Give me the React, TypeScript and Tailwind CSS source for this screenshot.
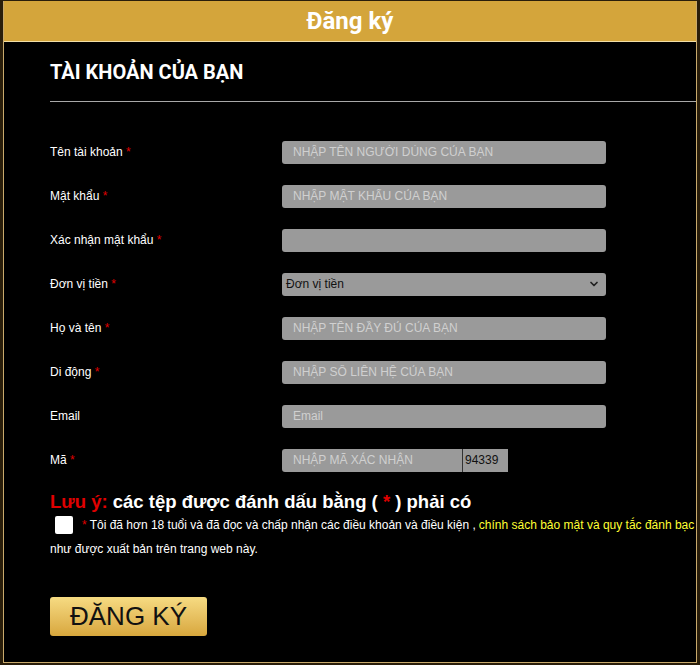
import { ChevronDown } from "lucide-react";

const fields = [
  { label: "Tên tài khoản", required: true, placeholder: "NHẬP TÊN NGƯỜI DÙNG CỦA BẠN" },
  { label: "Mật khẩu", required: true, placeholder: "NHẬP MẬT KHẨU CỦA BẠN" },
  { label: "Xác nhận mật khẩu", required: true, placeholder: "" },
];

const fields2 = [
  { label: "Họ và tên", required: true, placeholder: "NHẬP TÊN ĐẦY ĐỦ CỦA BẠN" },
  { label: "Di động", required: true, placeholder: "NHẬP SỐ LIÊN HỆ CỦA BẠN" },
  { label: "Email", required: false, placeholder: "Email" },
];

export default function App() {
  return (
    <div className="h-[665px] w-[700px] bg-[#2a1e0a] px-[3px] pb-[2px] pt-[1px] font-['Liberation_Sans',Arial,sans-serif]">
      <div className="flex h-full flex-col overflow-hidden border-x border-b border-[#c9aa6c] bg-black">
        {/* Header */}
        <div className="-mx-px flex h-[41px] shrink-0 items-center justify-center border-b border-[#f2dea6] bg-[#d4a53b]">
          <h1 className="font-['Roboto',sans-serif] text-[24px] font-bold text-white">
            Đăng ký
          </h1>
        </div>

        <div className="flex-1 pl-[46px] pt-[20px]">
          <h2 className="font-['Roboto',sans-serif] text-[20px] leading-[20px] font-bold text-white">
            TÀI KHOẢN CỦA BẠN
          </h2>
          <div className="mt-[19px] h-[1px] bg-[#a8a8a8]" />

          <div className="mt-[28px]">
            {fields.map((f) => (
              <FieldRow key={f.label} label={f.label} required={f.required}>
                <TextInput placeholder={f.placeholder} />
              </FieldRow>
            ))}

            <FieldRow label="Đơn vị tiền" required>
              <div className="flex h-[23px] w-[324px] items-center justify-between rounded-[3px] bg-[#9a9a9a] pl-[4px] pr-[6px] text-[12px] text-[#111]">
                <span>Đơn vị tiền</span>
                <ChevronDown size={12} strokeWidth={3.5} className="text-[#222]" />
              </div>
            </FieldRow>

            {fields2.map((f) => (
              <FieldRow key={f.label} label={f.label} required={f.required}>
                <TextInput placeholder={f.placeholder} />
              </FieldRow>
            ))}

            <FieldRow label="Mã" required>
              <div className="flex h-[23px]">
                <div className="flex w-[180px] items-center rounded-l-[3px] bg-[#9a9a9a] pl-[11px] text-[12px] text-[#d0d0d0]">
                  NHẬP MÃ XÁC NHẬN
                </div>
                <div className="flex w-[46px] items-center border-l border-[#333] bg-[#9a9a9a] pl-[2px] text-[12px] text-[#111]">
                  94339
                </div>
              </div>
            </FieldRow>
          </div>

          <p className="mt-[9px] text-[18.5px] leading-[22px] font-bold text-white">
            <span className="text-[#e00000]">Lưu ý:</span> các tệp được đánh dấu bằng ({" "}
            <span className="text-[#e00000]">*</span> ) phải có
          </p>

          <div className="mt-[1px] flex h-[22px] items-center whitespace-nowrap text-[12px]">
            <span className="ml-[5px] h-[18px] w-[18px] shrink-0 rounded-[2px] bg-white" />
            <span className="ml-[9px] text-[#e00000]">*</span>
            <span className="ml-[3px] text-white">
              Tôi đã hơn 18 tuổi và đã đọc và chấp nhận các điều khoản và điều kiện ,{" "}
            </span>
            <span className="ml-[3px] text-[#ffff33]">
              chính sách bảo mật và quy tắc đánh bạc
            </span>
          </div>
          <p className="mt-[2px] text-[12px] leading-[22px] text-white">
            như được xuất bản trên trang web này.
          </p>

          <button
            type="button"
            className="mt-[37px] flex h-[39px] w-[157px] items-center justify-center rounded-[3px] bg-gradient-to-b from-[#f6db82] to-[#d8a73c] text-[26px] text-[#111]"
          >
            ĐĂNG KÝ
          </button>
        </div>
      </div>
    </div>
  );
}

function FieldRow({
  label,
  required,
  children,
}: {
  label: string;
  required?: boolean;
  children: React.ReactNode;
}) {
  return (
    <div className="flex h-[44px] items-center">
      <div className="w-[232px] text-[12px] text-white">
        {label}
        {required && <span className="text-[#e00000]"> *</span>}
      </div>
      {children}
    </div>
  );
}

function TextInput({ placeholder }: { placeholder: string }) {
  return (
    <input
      type="text"
      placeholder={placeholder}
      className="h-[23px] w-[324px] rounded-[3px] bg-[#9a9a9a] pl-[11px] text-[12px] text-[#111] outline-none placeholder:text-[#d0d0d0]"
    />
  );
}
